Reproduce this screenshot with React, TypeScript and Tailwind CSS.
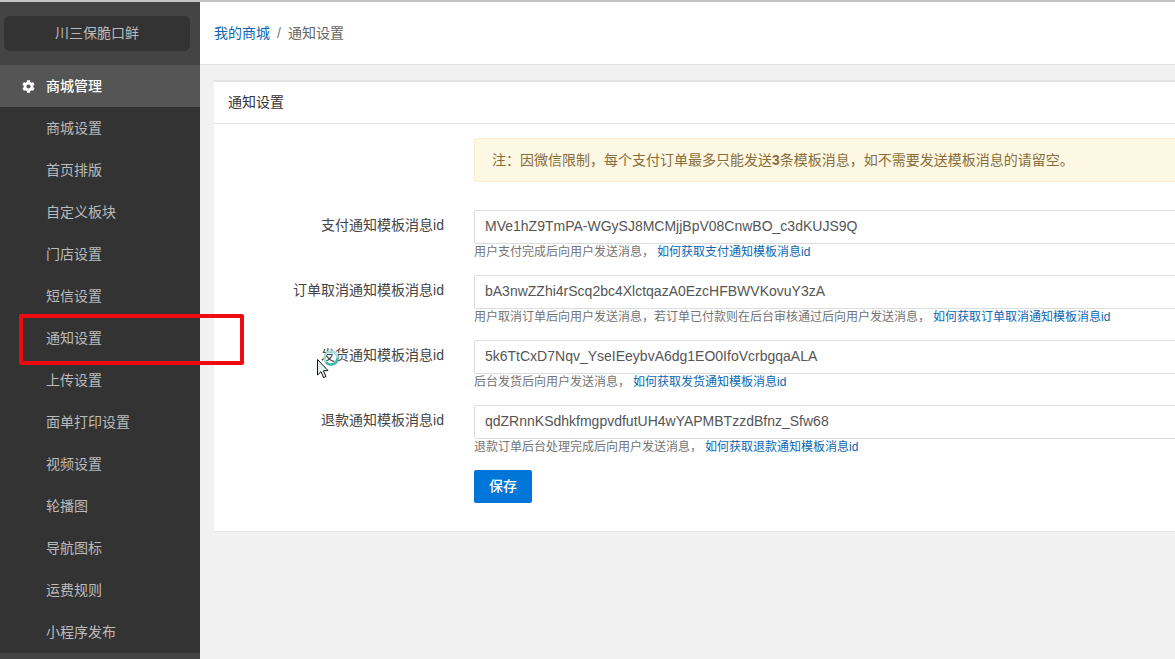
import { FaCog } from "react-icons/fa";

const cjk = "font-['Liberation_Sans','Noto_Sans_CJK_SC',sans-serif]";

const menuItems = [
  "商城设置",
  "首页排版",
  "自定义板块",
  "门店设置",
  "短信设置",
  "通知设置",
  "上传设置",
  "面单打印设置",
  "视频设置",
  "轮播图",
  "导航图标",
  "运费规则",
  "小程序发布",
];

const fields = [
  {
    label: "支付通知模板消息id",
    value: "MVe1hZ9TmPA-WGySJ8MCMjjBpV08CnwBO_c3dKUJS9Q",
    help: "用户支付完成后向用户发送消息，",
    link: "如何获取支付通知模板消息id",
  },
  {
    label: "订单取消通知模板消息id",
    value: "bA3nwZZhi4rScq2bc4XlctqazA0EzcHFBWVKovuY3zA",
    help: "用户取消订单后向用户发送消息，若订单已付款则在后台审核通过后向用户发送消息，",
    link: "如何获取订单取消通知模板消息id",
  },
  {
    label: "发货通知模板消息id",
    value: "5k6TtCxD7Nqv_YseIEeybvA6dg1EO0IfoVcrbgqaALA",
    help: "后台发货后向用户发送消息，",
    link: "如何获取发货通知模板消息id",
  },
  {
    label: "退款通知模板消息id",
    value: "qdZRnnKSdhkfmgpvdfutUH4wYAPMBTzzdBfnz_Sfw68",
    help: "退款订单后台处理完成后向用户发送消息，",
    link: "如何获取退款通知模板消息id",
  },
];

function Sidebar() {
  return (
    <aside className="w-[200px] shrink-0 bg-[#444444] flex flex-col">
      <div className="h-[63px] pt-[14px] pl-[4px]">
        <div className="w-[186px] h-[35px] rounded-[6px] bg-[#333333] flex items-center justify-center text-[14px] text-[#bbbbbb]">
          川三保脆口鲜
        </div>
      </div>
      <div className="h-[42px] bg-[#555555] flex items-center text-[14px] font-medium text-white">
        <FaCog className="ml-[22px] mr-[11px] w-[13px] h-[13px]" />
        商城管理
      </div>
      <ul className="bg-[#333333]">
        {menuItems.map((item) => (
          <li key={item} className="h-[42px] pl-[46px] flex items-center text-[14px] text-[#bbbbbb]">
            {item}
          </li>
        ))}
      </ul>
    </aside>
  );
}

function Field({ label, value, help, link }: (typeof fields)[number]) {
  return (
    <div className="flex h-[65px]">
      <label className="w-[230px] shrink-0 pt-[6px] text-right text-[14px] leading-[18px] text-[#444444]">
        {label}
      </label>
      <div className="ml-[30px] flex-1 min-w-0">
        <div className="h-[34px] border border-[#dddddd] rounded-[2px] bg-white pl-[10px] pb-[1px] flex items-center text-[14px] text-[#555555] whitespace-nowrap">
          {value}
        </div>
        <p className="text-[12px] leading-[17px] text-[#737373] whitespace-nowrap">
          {help}
          <a className="ml-[3px] text-[#0d66b1]">{link}</a>
        </p>
      </div>
    </div>
  );
}

export default function App() {
  return (
    <div className={`relative w-[1175px] h-[659px] overflow-hidden border-t-2 border-[#c4c4c4] flex ${cjk}`}>
      <Sidebar />
      <main className="flex-1 min-w-0 bg-[#f1f1f1]">
        <div className="h-[63px] bg-white border-b border-[#e2e2e2] pl-[14px] flex items-center text-[14px]">
          <a className="text-[#0d66b1]">我的商城</a>
          <span className="mx-[7px] text-[#777777]">/</span>
          <span className="text-[#666666]">通知设置</span>
        </div>
        <section className="mt-[15px] ml-[14px] w-[1100px] h-[452px] bg-white border-t-[2px] border-[#e3e3e3] border-b border-b-[#e6e6e6]">
          <h2 className="h-[42px] pl-[14px] border-b border-[#e5e5e5] flex items-center text-[14px] font-normal text-[#333333]">
            通知设置
          </h2>
          <div className="pt-[14px]">
            <div className="ml-[260px] h-[44px] mb-[28px] bg-[#fcf8e3] border border-[#faebcc] rounded-[2px] pl-[17px] flex items-center text-[14px] text-[#8a6d3b]">
              注：因微信限制，每个支付订单最多只能发送<b>3</b>条模板消息，如不需要发送模板消息的请留空。
            </div>
            {fields.map((f) => (
              <Field key={f.label} {...f} />
            ))}
            <button className="ml-[260px] w-[58px] h-[33px] rounded-[2px] bg-[#0275d8] text-[14px] font-medium text-white">
              保存
            </button>
          </div>
        </section>
      </main>

      <div className="absolute left-[19px] top-[312px] w-[225px] h-[51px] border-[4px] border-[#ee0a0f] rounded-[2px]" />
      <svg className="absolute left-[320px] top-[346px] z-10" width="22" height="20" viewBox="0 0 22 20">
        <circle cx="11" cy="10" r="6.5" fill="none" stroke="#a6e0db" strokeWidth="2.4" />
        <path d="M17.5 10 A6.5 6.5 0 0 1 6 14.2" fill="none" stroke="#3fb3aa" strokeWidth="2.4" />
      </svg>
      <svg className="absolute left-[316px] top-[356px] z-20" width="14" height="22" viewBox="0 0 14 22">
        <path d="M1.5 1.5 L1.5 17 L5 13.7 L7.6 19.6 L10 18.5 L7.4 12.8 L12 12.6 Z" fill="#dff3ec" stroke="#111111" strokeWidth="1" />
      </svg>
    </div>
  );
}
